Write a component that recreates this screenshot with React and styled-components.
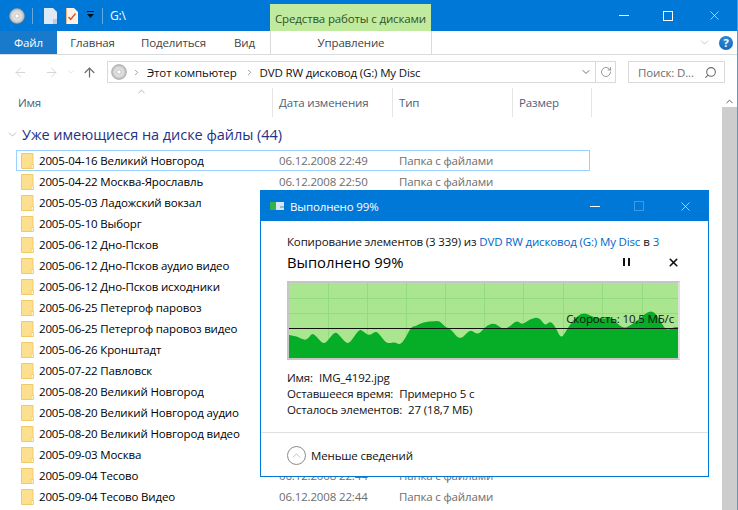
import React from 'react';
import styled, { createGlobalStyle } from 'styled-components';
import { ArrowLeft, ArrowRight, ArrowUp, ChevronDown, ChevronRight, ChevronUp, RotateCw, Search, X } from 'lucide-react';

const GlobalStyle = createGlobalStyle`
  html, body { margin: 0; padding: 0; background: #fff; }
  body { font-family: "Open Sans", "Noto Sans", "Liberation Sans", sans-serif; font-size: 11.5px; }
  * { box-sizing: border-box; }
`;

const Explorer = styled.div`
  position: relative;
  width: 738px;
  height: 510px;
  overflow: hidden;
  background: #fff;
  color: #000;
  letter-spacing: -0.15px;
  border-right: 1px solid #3ba6dd;
`;

const TitleBar = styled.div`
  display: flex;
  height: 31px;
  background: #0078d7;
  color: #fff;
`;

const QuickAccess = styled.div`
  display: flex;
  align-items: center;
  width: 270px;
  padding-left: 9px;
`;

const QatDivider = styled.span`
  width: 1px;
  height: 16px;
  background: #6aa9de;
  margin: ${({ $margin }) => $margin};
`;

const QatGap = styled.span`
  width: ${({ $width }) => $width}px;
`;

const PathTitle = styled.span`
  margin-left: 7px;
  font-size: 12px;
`;

const ContextTab = styled.div`
  width: 161px;
  margin-top: 4px;
  background: #c0eb9f;
  color: #33502a;
  display: flex;
  align-items: center;
  justify-content: center;
  padding-top: 1px;
`;

const WindowButtons = styled.div`
  flex: 1;
  display: flex;
  justify-content: flex-end;
  align-items: center;
  padding-right: 15px;
  gap: 34px;
`;

const Minimize = styled.span`
  width: 10px;
  height: 1px;
  background: ${({ $color }) => $color || '#fff'};
`;

const Maximize = styled.span`
  width: 10px;
  height: 10px;
  border: 1px solid ${({ $color }) => $color || '#fff'};
`;

const RibbonTabs = styled.div`
  display: flex;
  height: 24px;
  border-bottom: 1px solid #dadbdc;
  color: #444;
`;

const RibbonTab = styled.div`
  width: ${({ $width }) => $width}px;
  display: flex;
  align-items: center;
  justify-content: center;
  background: ${({ $active }) => ($active ? '#1979ca' : 'transparent')};
  color: ${({ $active }) => ($active ? '#fff' : '#444')};
  border-left: ${({ $context }) => ($context ? '1px solid #dadbdc' : 'none')};
  border-right: ${({ $context }) => ($context ? '1px solid #dadbdc' : 'none')};
`;

const RibbonEnd = styled.div`
  flex: 1;
  display: flex;
  justify-content: flex-end;
  align-items: center;
  gap: 8px;
  padding-right: 4px;
`;

const HelpBadge = styled.span`
  width: 14px;
  height: 14px;
  border-radius: 50%;
  background: radial-gradient(circle at 50% 30%, #2f8fdc, #0e5fae);
  color: #fff;
  font-size: 11px;
  font-weight: 700;
  display: flex;
  align-items: center;
  justify-content: center;
`;

const AddressRow = styled.div`
  display: flex;
  align-items: center;
  height: 33px;
  padding-top: 1px;
`;

const NavButtons = styled.div`
  width: 107px;
  display: flex;
  align-items: center;
  padding-left: 13px;
  color: #d4d4d4;
`;

const NavSlot = styled.span`
  display: flex;
  margin-right: ${({ $gap }) => $gap}px;
  color: ${({ $color }) => $color || 'inherit'};
`;

const AddressBox = styled.div`
  width: 509px;
  height: 22px;
  border: 1px solid #d9d9d9;
  display: flex;
  align-items: center;
  padding-left: 3px;
`;

const Crumb = styled.span`
  margin: 0 6px 0 ${({ $left }) => $left}px;
  white-space: nowrap;
  color: #111;
`;

const CrumbArrow = styled.span`
  display: flex;
  color: #808080;
  margin-left: ${({ $left }) => $left || 0}px;
`;

const AddressTools = styled.div`
  margin-left: auto;
  display: flex;
  align-items: center;
  height: 100%;
  color: #6d6d6d;
`;

const RefreshSlot = styled.span`
  width: 20px;
  height: 100%;
  margin-left: 3px;
  border-left: 1px solid #d9d9d9;
  display: flex;
  align-items: center;
  justify-content: center;
  color: #777;
`;

const SearchBox = styled.div`
  width: 97px;
  height: 22px;
  margin-left: 12px;
  border: 1px solid #d9d9d9;
  display: flex;
  align-items: center;
  justify-content: space-between;
  padding: 0 7px 0 9px;
  color: #6d6d6d;
`;

const Body = styled.div`
  display: flex;
  height: 422px;
`;

const Content = styled.div`
  flex: 1;
  min-width: 0;
`;

const ColumnHeaders = styled.div`
  position: relative;
  display: grid;
  grid-template-columns: 272px 120px 120px 80px;
  height: 31px;
`;

const ColumnHeader = styled.div`
  display: flex;
  align-items: center;
  padding-left: ${({ $first }) => ($first ? 18 : 6)}px;
  margin-bottom: 2px;
  border-left: ${({ $first }) => ($first ? 'none' : '1px solid #e5e5e5')};
  border-right: ${({ $last }) => ($last ? '1px solid #e5e5e5' : 'none')};
  color: #4c607a;
`;

const SortMark = styled.span`
  position: absolute;
  left: 136px;
  top: -2px;
  display: flex;
  color: #777;
`;

const GroupHeading = styled.div`
  display: flex;
  align-items: center;
  height: 31px;
  padding-left: 6px;
  font-size: 14.5px;
  color: #1e3287;
  letter-spacing: -0.05px;
`;

const GroupToggle = styled.span`
  display: flex;
  color: #8a8a8a;
  margin-right: 3px;
`;

const FileList = styled.div`
  display: flex;
  flex-direction: column;
  margin-left: 16px;
  width: 574px;
`;

const FileRow = styled.div`
  display: grid;
  grid-template-columns: 258px 120px 1fr;
  align-items: center;
  height: 21px;
  flex: none;
  padding-left: 4px;
  border: 1px solid ${({ $focused }) => ($focused ? '#99d1ff' : 'transparent')};
  white-space: nowrap;
`;

const FileName = styled.div`
  display: flex;
  align-items: center;
  gap: 5px;
`;

const FileMeta = styled.div`
  color: #6d6d6d;
`;

const ScrollTrack = styled.div`
  width: 15px;
  display: flex;
  flex-direction: column;
  background: #fff;
`;

const ScrollArrow = styled.div`
  height: 19px;
  display: flex;
  align-items: flex-end;
  justify-content: center;
  color: #555;
`;

const ScrollThumb = styled.div`
  flex: 1;
  background: #cdcdcd;
`;

const CopyDialog = styled.div`
  position: absolute;
  left: 260px;
  top: 190px;
  width: 449px;
  height: 287px;
  background: #fff;
  border: 1px solid #0078d7;
  display: flex;
  flex-direction: column;
`;

const DialogTitle = styled.div`
  height: 30px;
  flex: none;
  background: #0078d7;
  color: #fff;
  display: flex;
  align-items: center;
  padding-left: 9px;
  gap: 6px;
`;

const DialogButtons = styled.div`
  margin-left: auto;
  display: flex;
  align-items: center;
  gap: 34px;
  padding-right: 15px;
`;

const DialogBody = styled.div`
  flex: 1;
  padding: 11px 28px 0 26px;
`;

const CopyLine = styled.div`
  height: 18px;
  display: flex;
  align-items: center;
  white-space: nowrap;
  color: #111;
  gap: 3px;
`;

const Link = styled.span`
  color: #0066cc;
`;

const ProgressRow = styled.div`
  display: flex;
  align-items: center;
  height: 24px;
  font-size: 14.8px;
  letter-spacing: 0;
`;

const ProgressActions = styled.div`
  margin-left: auto;
  display: flex;
  align-items: center;
  gap: 37px;
`;

const PauseIcon = styled.span`
  width: 7px;
  height: 8px;
  border-left: 2px solid #111;
  border-right: 2px solid #111;
`;

const Chart = styled.div`
  position: relative;
  width: 393px;
  height: 79px;
  margin-top: 7px;
  border: 2px solid #c6c6c6;
  border-right-color: #e0e0e0;
  background: #aae690;
  overflow: hidden;
`;

const ChartSvg = styled.svg`
  display: block;
`;

const SpeedLabel = styled.span`
  position: absolute;
  right: 4px;
  top: 28px;
  color: #111;
  white-space: nowrap;
`;

const Details = styled.div`
  margin-top: 10px;
  line-height: 16px;
  color: #111;
`;

const DetailRow = styled.div`
  display: flex;
  gap: 6px;
  white-space: nowrap;
`;

const DialogFooter = styled.div`
  height: 44px;
  flex: none;
  border-top: 1px solid #e0e0e0;
  display: flex;
  align-items: center;
  gap: 5px;
  padding: 2px 0 0 26px;
  color: #111;
`;

const CollapseButton = styled.span`
  width: 19px;
  height: 19px;
  border: 1px solid #8c8c8c;
  border-radius: 50%;
  display: flex;
  align-items: center;
  justify-content: center;
  color: #8c8c8c;
`;

const folders = [
  ['2005-04-16 Великий Новгород', '06.12.2008 22:49'],
  ['2005-04-22 Москва-Ярославль', '06.12.2008 22:50'],
  ['2005-05-03 Ладожский вокзал', '06.12.2008 22:50'],
  ['2005-05-10 Выборг', '06.12.2008 22:50'],
  ['2005-06-12 Дно-Псков', '06.12.2008 22:50'],
  ['2005-06-12 Дно-Псков аудио видео', '06.12.2008 22:50'],
  ['2005-06-12 Дно-Псков исходники', '06.12.2008 22:50'],
  ['2005-06-25 Петергоф паровоз', '06.12.2008 22:50'],
  ['2005-06-25 Петергоф паровоз видео', '06.12.2008 22:50'],
  ['2005-06-26 Кронштадт', '06.12.2008 22:50'],
  ['2005-07-22 Павловск', '06.12.2008 22:50'],
  ['2005-08-20 Великий Новгород', '06.12.2008 22:50'],
  ['2005-08-20 Великий Новгород аудио', '06.12.2008 22:50'],
  ['2005-08-20 Великий Новгород видео', '06.12.2008 22:50'],
  ['2005-09-03 Москва', '06.12.2008 22:44'],
  ['2005-09-04 Тесово', '06.12.2008 22:44'],
  ['2005-09-04 Тесово Видео', '06.12.2008 22:44'],
  ['', ''],
];

const speedPoints = [
  [0, 52], [6, 53], [9, 54], [15, 57], [19, 56], [23, 50], [27, 53], [33, 60], [37, 60],
  [46, 48], [51, 53], [57, 60], [61, 60], [70, 46], [74, 48], [80, 53], [87, 48], [91, 52],
  [97, 60], [102, 60], [106, 59], [111, 62], [116, 56], [122, 44], [127, 43], [134, 39],
  [146, 38], [151, 38], [156, 44], [162, 46], [171, 58], [181, 46], [187, 51], [191, 50],
  [198, 42], [206, 40], [213, 46], [219, 45], [228, 37], [233, 42], [241, 36], [250, 34],
  [256, 43], [261, 38], [266, 43], [272, 56], [277, 48], [284, 37], [294, 29], [304, 34],
  [314, 36], [322, 34], [334, 46], [342, 42], [349, 37], [362, 26], [370, 35], [377, 48],
  [385, 44], [389, 44],
];

const DiscIcon = ({ size = 16 }) => (
  <svg width={size} height={size} viewBox="0 0 16 16">
    <defs>
      <radialGradient id="discFill" cx="50%" cy="50%" r="55%">
        <stop offset="0%" stopColor="#f4f4f4" />
        <stop offset="60%" stopColor="#d8d8d8" />
        <stop offset="100%" stopColor="#a8a8a8" />
      </radialGradient>
    </defs>
    <circle cx="8" cy="8" r="7.5" fill="url(#discFill)" stroke="#9a9a9a" strokeWidth="0.5" />
    <circle cx="8" cy="8" r="2.2" fill="#fff" stroke="#a0a0a0" strokeWidth="0.6" />
  </svg>
);

const PageIcon = () => (
  <svg width="13" height="16" viewBox="0 0 13 16" style={{ display: 'block' }}>
    <path d="M0 0h9l4 4v12H0z" fill="#dfe9f5" />
    <path d="M9 11l4 0v5H9z" fill="#b9cbe0" />
  </svg>
);

const CheckDocIcon = () => (
  <svg width="12" height="16" viewBox="0 0 12 16" style={{ display: 'block' }}>
    <path d="M0 0h8l4 4v12H0z" fill="#fbf3ea" />
    <path d="M2.5 9l2.2 2.5L9.5 5.5" fill="none" stroke="#e0501c" strokeWidth="1.4" />
    <path d="M0 0h1v16H0z" fill="#e9b58c" />
  </svg>
);

const QatDropdown = () => (
  <svg width="9" height="9" viewBox="0 0 9 9" style={{ display: 'block' }}>
    <path d="M1 0h7v1H1z" fill="#111" />
    <path d="M1 3h7L4.5 7z" fill="#111" />
  </svg>
);

const FolderIcon = () => (
  <svg width="13" height="16" viewBox="0 0 13 16" style={{ display: 'block', flex: 'none' }}>
    <path d="M0.5 0.5h11.5v15H0.5z" fill="#fde08f" stroke="#eecb68" />
    <path d="M10 11.5h2.5v4H10z" fill="#fff2c4" stroke="#eecb68" strokeWidth="0.8" />
  </svg>
);

const DialogStatusIcon = () => (
  <svg width="14" height="8" viewBox="0 0 14 8" style={{ display: 'block', flex: 'none' }}>
    <rect width="14" height="8" fill="#d9e8f5" />
    <rect width="6" height="8" fill="#34b14a" />
    <rect x="10" y="4" width="4" height="2" fill="#9fb6ca" />
  </svg>
);

// rounds the sampled speed values off with quadratic curves through the midpoints
const smoothArea = (points) => {
  let d = `M0 75 L${points[0][0]} ${points[0][1]}`;
  for (let i = 1; i < points.length - 1; i++) {
    const [x, y] = points[i];
    const [nx, ny] = points[i + 1];
    d += ` Q${x} ${y} ${(x + nx) / 2} ${(y + ny) / 2}`;
  }
  const [lx, ly] = points[points.length - 1];
  return `${d} L${lx} ${ly} L${lx} 75 Z`;
};

const SpeedChart = () => (
  <ChartSvg width="389" height="75" viewBox="0 0 389 75">
    {[39, 78, 117, 156, 195, 234, 274, 313, 353].map((x) => (
      <path key={x} d={`M${x}.5 0V75`} stroke="#93dc7e" />
    ))}
    {[15, 30, 45, 61].map((y) => (
      <path key={y} d={`M0 ${y}.5H389`} stroke="#93dc7e" />
    ))}
    <path d={smoothArea(speedPoints)} fill="#06ad27" />
    <path d="M0 45.5H389" stroke="#111" />
  </ChartSvg>
);

const App = () => (
  <Explorer>
    <GlobalStyle />
    <TitleBar>
      <QuickAccess>
        <DiscIcon />
        <QatDivider $margin="0 11px 0 7px" />
        <PageIcon />
        <QatGap $width={9} />
        <CheckDocIcon />
        <QatGap $width={8} />
        <QatDropdown />
        <QatDivider $margin="0 0 0 7px" />
        <PathTitle>G:\</PathTitle>
      </QuickAccess>
      <ContextTab>Средства работы с дисками</ContextTab>
      <WindowButtons>
        <Minimize />
        <Maximize />
        <X size={15} strokeWidth={1} color="#fff" />
      </WindowButtons>
    </TitleBar>

    <RibbonTabs>
      <RibbonTab $width={57} $active>Файл</RibbonTab>
      <RibbonTab $width={71}>Главная</RibbonTab>
      <RibbonTab $width={91}>Поделиться</RibbonTab>
      <RibbonTab $width={51}>Вид</RibbonTab>
      <RibbonTab $width={162} $context>Управление</RibbonTab>
      <RibbonEnd>
        <ChevronDown size={13} strokeWidth={1} color="#9a9a9a" />
        <HelpBadge>?</HelpBadge>
      </RibbonEnd>
    </RibbonTabs>

    <AddressRow>
      <NavButtons>
        <NavSlot $gap={16}><ArrowLeft size={15} strokeWidth={1.5} /></NavSlot>
        <NavSlot $gap={7}><ArrowRight size={15} strokeWidth={1.5} /></NavSlot>
        <NavSlot $gap={6}><ChevronDown size={10} strokeWidth={1.5} /></NavSlot>
        <NavSlot $gap={0} $color="#6d6d6d"><ArrowUp size={15} strokeWidth={2} /></NavSlot>
      </NavButtons>
      <AddressBox>
        <DiscIcon />
        <CrumbArrow $left={5}><ChevronRight size={9} strokeWidth={2} /></CrumbArrow>
        <Crumb $left={6}>Этот компьютер</Crumb>
        <CrumbArrow $left={2}><ChevronRight size={9} strokeWidth={2} /></CrumbArrow>
        <Crumb $left={6}>DVD RW дисковод (G:) My Disc</Crumb>
        <AddressTools>
          <ChevronDown size={12} strokeWidth={2} />
          <RefreshSlot><RotateCw size={12} strokeWidth={1.5} /></RefreshSlot>
        </AddressTools>
      </AddressBox>
      <SearchBox>
        Поиск: D...
        <Search size={13} strokeWidth={2} style={{ transform: 'scaleX(-1)' }} />
      </SearchBox>
    </AddressRow>

    <Body>
      <Content>
        <ColumnHeaders>
          <SortMark><ChevronUp size={11} strokeWidth={1.2} /></SortMark>
          <ColumnHeader $first>Имя</ColumnHeader>
          <ColumnHeader>Дата изменения</ColumnHeader>
          <ColumnHeader>Тип</ColumnHeader>
          <ColumnHeader $last>Размер</ColumnHeader>
        </ColumnHeaders>
        <GroupHeading>
          <GroupToggle><ChevronDown size={13} strokeWidth={1} /></GroupToggle>
          Уже имеющиеся на диске файлы (44)
        </GroupHeading>
        <FileList>
          {folders.map(([name, date], i) => (
            <FileRow key={i} $focused={i === 0}>
              <FileName><FolderIcon />{name}</FileName>
              <FileMeta>{date}</FileMeta>
              <FileMeta>{name ? 'Папка с файлами' : ''}</FileMeta>
            </FileRow>
          ))}
        </FileList>
      </Content>
      <ScrollTrack>
        <ScrollArrow><ChevronUp size={11} strokeWidth={2} /></ScrollArrow>
        <ScrollThumb />
      </ScrollTrack>
    </Body>

    <CopyDialog>
      <DialogTitle>
        <DialogStatusIcon />
        Выполнено 99%
        <DialogButtons>
          <Minimize />
          <Maximize $color="#3d9be6" />
          <X size={15} strokeWidth={1} color="#fff" />
        </DialogButtons>
      </DialogTitle>
      <DialogBody>
        <CopyLine>
          Копирование элементов (3 339) из <Link>DVD RW дисковод (G:) My Disc</Link> в <Link>3</Link>
        </CopyLine>
        <ProgressRow>
          Выполнено 99%
          <ProgressActions>
            <PauseIcon />
            <X size={13} strokeWidth={3} color="#111" />
          </ProgressActions>
        </ProgressRow>
        <Chart>
          <SpeedChart />
          <SpeedLabel>Скорость: 10,5 МБ/с</SpeedLabel>
        </Chart>
        <Details>
          <DetailRow><span>Имя:</span><span>IMG_4192.jpg</span></DetailRow>
          <DetailRow><span>Оставшееся время:</span><span>Примерно 5 с</span></DetailRow>
          <DetailRow><span>Осталось элементов:</span><span>27 (18,7 МБ)</span></DetailRow>
        </Details>
      </DialogBody>
      <DialogFooter>
        <CollapseButton><ChevronUp size={13} strokeWidth={1} /></CollapseButton>
        Меньше сведений
      </DialogFooter>
    </CopyDialog>
  </Explorer>
);

export default App;
